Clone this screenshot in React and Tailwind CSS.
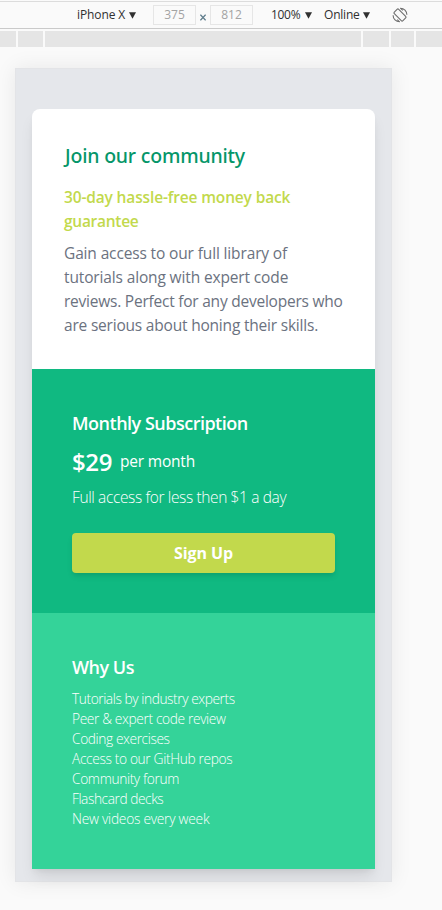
const benefits = [
  ['Tutorials by industry experts', 'tracking-[-0.43px]'],
  ['Peer & expert code review', 'tracking-[-0.37px]'],
  ['Coding exercises', 'tracking-[-0.4px]'],
  ['Access to our GitHub repos', 'tracking-[-0.36px]'],
  ['Community forum', 'tracking-[-0.37px]'],
  ['Flashcard decks', 'tracking-[-0.45px]'],
  ['New videos every week', 'tracking-[-0.25px]'],
];

function Caret({ className }) {
  return (
    <svg className={`h-[7px] w-[7px] shrink-0 ${className}`} viewBox="0 0 7 7" fill="#303030">
      <path d="M0 .2h7L3.5 6.8z" />
    </svg>
  );
}

function RotateIcon() {
  return (
    <svg className="ml-[22px] h-[16px] w-[16px] shrink-0" viewBox="0 0 16 16" fill="none" stroke="#6e6e6e" strokeWidth="1.1">
      <rect x="4.9" y="1.9" width="6.2" height="12.2" rx="1.2" transform="rotate(-45 8 8)" />
      <path d="M8.4 1.2C12 1.2 14.9 4.2 14.9 7.8M7.6 14.8C4 14.8 1.1 11.8 1.1 8.2" />
      <path d="M8.4 1.2l2.4 2.2M7.6 14.8l-2.4-2.2" />
    </svg>
  );
}

function Toolbar() {
  return (
    <div className="mt-px flex h-7 items-center border-t border-b border-t-[#dcdcdc] border-b-[#cacaca] pl-[77px] text-[12px] leading-4 whitespace-nowrap text-[#303030]">
      <span className="w-[47px] tracking-[-0.1px]">iPhone X</span>
      <Caret className="ml-[5px]" />
      <span className="ml-[17px] flex h-5 w-[43px] items-center justify-center border border-[#e6e6e6] text-[#a3a3a3]">375</span>
      <svg className="mx-[4px] mt-[5px] h-[7px] w-[6px]" viewBox="0 0 6 7" stroke="#5f7d8c" strokeWidth="1.3">
        <path d="M.4.7l5.2 5.6M5.6.7L.4 6.3" />
      </svg>
      <span className="flex h-5 w-[43px] items-center justify-center border border-[#e6e6e6] text-[#a3a3a3]">812</span>
      <span className="ml-[18px] w-[29px] tracking-[-0.3px]">100%</span>
      <Caret className="ml-[5px]" />
      <span className="ml-[12px] w-[35px] tracking-[-0.2px]">Online</span>
      <Caret className="ml-[4px]" />
      <RotateIcon />
    </div>
  );
}

function Ruler() {
  return (
    <div className="mt-[2px] flex h-4 gap-[2px]">
      <div className="w-4 bg-[#e5e5e5]" />
      <div className="w-[25px] bg-[#e5e5e5]" />
      <div className="w-[316px] bg-[#e5e5e5]" />
      <div className="w-[26px] bg-[#e5e5e5]" />
      <div className="w-[23px] bg-[#e5e5e5]" />
      <div className="flex-1 bg-[#e5e5e5]" />
    </div>
  );
}

export default function App() {
  return (
    <div className="h-[910px] w-[442px] overflow-hidden bg-[#fafafa] font-['Open_Sans','Noto_Sans',sans-serif]">
      <Toolbar />
      <Ruler />
      <div className="mt-[21px] ml-[15px] h-[814px] w-[377px] border border-[#e3e4e7] bg-[#e5e7eb] px-4 pt-10 whitespace-nowrap shadow-[0_0_20px_rgba(0,0,0,0.08)]">
        <main className="rounded-t-lg shadow-[0_10px_15px_-3px_rgba(0,0,0,0.1),0_4px_6px_-2px_rgba(0,0,0,0.05)]">
          <section className="h-[260px] rounded-t-lg bg-white px-8 pt-[33px]">
            <h1 className="pl-px font-['Noto_Sans','Open_Sans',sans-serif] text-[19.5px] leading-7 font-medium tracking-[-0.2px] text-[#059669]">Join our community</h1>
            <h2 className="mt-[15px] text-[15.5px] leading-6 font-semibold text-[#c2d94c]">
              <span className="block tracking-[-0.15px]">30-day hassle-free money back</span>
              <span className="block tracking-[-0.28px]">guarantee</span>
            </h2>
            <p className="mt-2 text-[15.5px] leading-6 text-[#6b7280]">
              <span className="block tracking-[-0.14px]">Gain access to our full library of</span>
              <span className="block tracking-[-0.14px]">tutorials along with expert code</span>
              <span className="block tracking-[-0.23px]">reviews. Perfect for any developers who</span>
              <span className="block tracking-[-0.2px]">are serious about honing their skills.</span>
            </p>
          </section>
          <section className="h-[244px] bg-[#10b981] p-10 text-white">
            <h3 className="text-[18px] leading-7 font-semibold tracking-[-0.5px]">Monthly Subscription</h3>
            <div className="mt-2 flex h-8 items-center">
              <span className="w-[40px] pt-px text-[24px] leading-8 font-semibold tracking-[-0.4px]">$29</span>
              <span className="ml-2 text-[15.5px] leading-6 tracking-[-0.2px]">per month</span>
            </div>
            <p className="mt-2 text-[15.5px] leading-6 font-light tracking-[-0.37px]">Full access for less then $1 a day</p>
            <button className="mt-6 block h-10 w-full rounded bg-[#c2d94c] text-[16px] leading-6 font-bold tracking-[-0.1px] shadow-[0_4px_6px_-1px_rgba(0,0,0,0.1),0_2px_4px_-1px_rgba(0,0,0,0.06)]">
              Sign Up
            </button>
          </section>
          <section className="h-[256px] bg-[#34d399] p-10 text-white">
            <h3 className="text-[18px] leading-7 font-semibold tracking-[-0.5px]">Why Us</h3>
            <ul className="mt-2 text-[13.75px] leading-5 font-light">
              {benefits.map(([label, tracking]) => (
                <li key={label} className={tracking}>{label}</li>
              ))}
            </ul>
          </section>
        </main>
      </div>
    </div>
  );
}
